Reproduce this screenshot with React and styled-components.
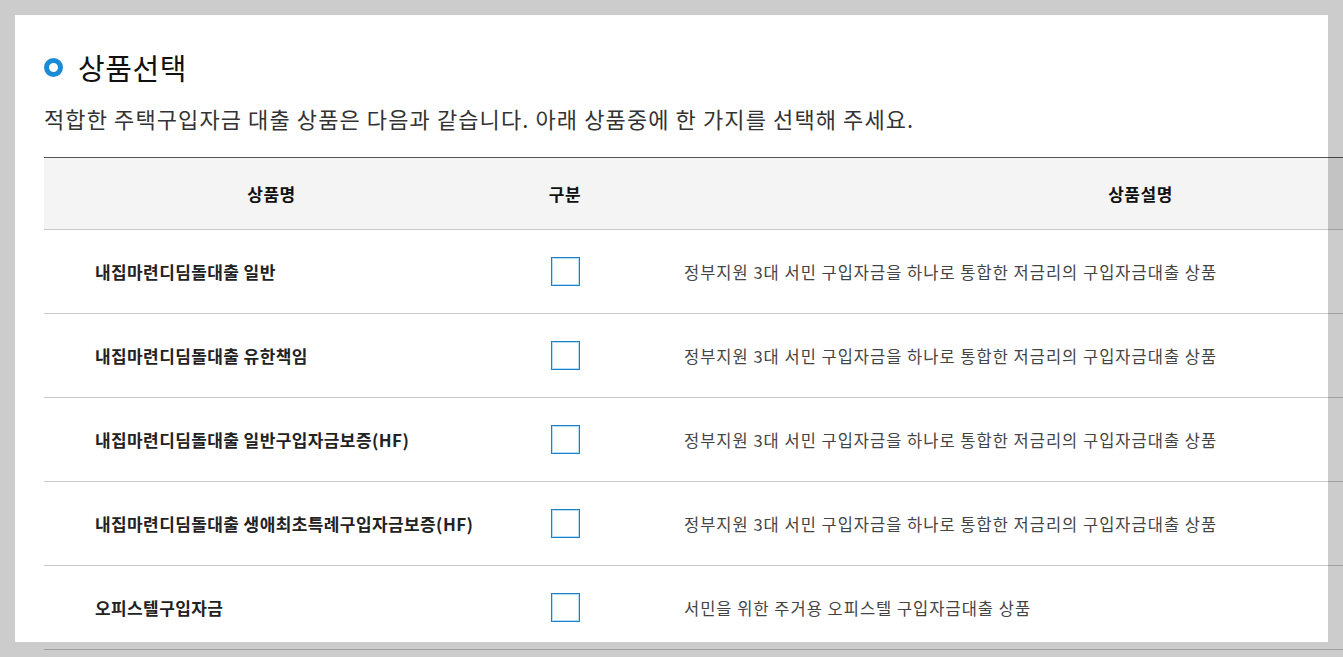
import styled, { createGlobalStyle } from "styled-components";

const products = [
	{
		name: "내집마련디딤돌대출 일반",
		desc: "정부지원 3대 서민 구입자금을 하나로 통합한 저금리의 구입자금대출 상품",
	},
	{
		name: "내집마련디딤돌대출 유한책임",
		desc: "정부지원 3대 서민 구입자금을 하나로 통합한 저금리의 구입자금대출 상품",
	},
	{
		name: "내집마련디딤돌대출 일반구입자금보증(HF)",
		desc: "정부지원 3대 서민 구입자금을 하나로 통합한 저금리의 구입자금대출 상품",
	},
	{
		name: "내집마련디딤돌대출 생애최초특례구입자금보증(HF)",
		desc: "정부지원 3대 서민 구입자금을 하나로 통합한 저금리의 구입자금대출 상품",
	},
	{
		name: "오피스텔구입자금",
		desc: "서민을 위한 주거용 오피스텔 구입자금대출 상품",
	},
];

export default function App() {
	return (
		<>
			<GlobalStyle />
			<Page>
				<Title>
					<Ring />
					<h2>상품선택</h2>
				</Title>
				<Lead>
					적합한 주택구입자금 대출 상품은 다음과 같습니다. 아래 상품중에 한
					가지를 선택해 주세요.
				</Lead>
				<Table>
					<HeadRow>
						<Cell center>상품명</Cell>
						<Cell center>구분</Cell>
						<Cell center>상품설명</Cell>
					</HeadRow>
					{products.map((p, idx) => (
						<Row key={idx}>
							<Cell className="name">{p.name}</Cell>
							<Cell center>
								<Check type="checkbox" aria-label={p.name} />
							</Cell>
							<Cell className="desc">{p.desc}</Cell>
						</Row>
					))}
				</Table>
			</Page>
			<Spotlight />
		</>
	);
}

const GlobalStyle = createGlobalStyle`
	html, body {
		margin: 0;
		background: #ffffff;
		overflow: hidden;
	}
	body {
		font-family: "Noto Sans CJK KR", "Noto Sans", sans-serif;
		color: #222;
	}
`;

const Page = styled.div`
	height: 657px;
	overflow: hidden;
	padding: 47px 0 0 44px;
	box-sizing: border-box;
`;

const Title = styled.div`
	display: flex;
	align-items: center;
	gap: 15px;
	height: 40px;

	h2 {
		margin: 0;
		font-size: 29px;
		font-weight: 400;
		color: #111;
		letter-spacing: 0.6px;
		line-height: 40px;
	}
`;

const Ring = styled.span`
	width: 19px;
	height: 19px;
	border-radius: 50%;
	box-sizing: border-box;
	border: 5px solid #1a8bd5;
	flex-shrink: 0;
`;

const Lead = styled.p`
	margin: 16px 0 0 0;
	font-size: 22px;
	line-height: 30px;
	color: #333;
	white-space: nowrap;
	letter-spacing: 1.1px;
`;

const Table = styled.div`
	margin-top: 24px;
	width: 1606px;
	border-top: 1px solid #555;
`;

const Row = styled.div`
	display: grid;
	grid-template-columns: 455px 132px 1019px;
	height: 84px;
	box-sizing: border-box;
	border-bottom: 1px solid #c8c8c8;

	.name {
		padding-left: 51px;
		font-size: 17px;
		font-weight: 700;
		color: #222;
		letter-spacing: 0.4px;
	}

	.desc {
		padding-left: 53px;
		font-size: 16.5px;
		color: #444;
		letter-spacing: 1px;
	}
`;

const HeadRow = styled(Row)`
	height: 72px;
	background: #f4f4f4;
	font-size: 17px;
	font-weight: 700;
	color: #111;
	letter-spacing: 0.5px;
`;

const Cell = styled.div`
	display: flex;
	align-items: center;
	justify-content: ${({ center }) => (center ? "center" : "flex-start")};
	white-space: nowrap;
`;

const Check = styled.input`
	appearance: none;
	margin: 0;
	width: 29px;
	height: 29px;
	box-sizing: border-box;
	border: 1px solid #1b80c6;
	box-shadow: inset 0 0 0 1px #b6def6;
	background: #fff;
	cursor: pointer;
`;

const Spotlight = styled.div`
	position: fixed;
	left: 15px;
	top: 15px;
	width: 1313px;
	height: 627px;
	box-shadow: 0 0 0 2000px rgba(0, 0, 0, 0.2);
	pointer-events: none;
`;
